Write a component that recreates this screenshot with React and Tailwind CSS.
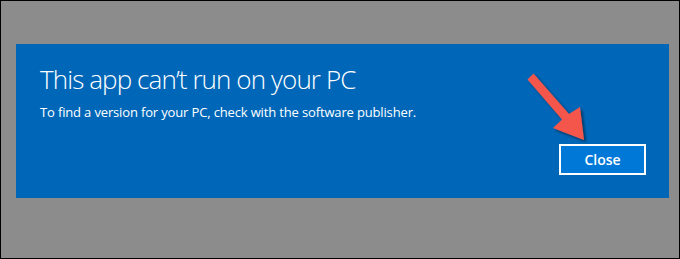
export default function App() {
  return (
    <div className="relative w-[680px] h-[259px] border border-black bg-[#8c8c8c] pl-[15px] pt-[43px]" style={{ fontFamily: '"Open Sans", "Noto Sans", sans-serif' }}>
      <div className="flex flex-col w-[653px] h-[154px] bg-[#0067b8] pl-6 pr-[23px] pb-[23px]">
        <h1 className="mt-[17px] text-[26px] leading-[36px] font-light text-white tracking-[-0.9px]">This app can’t run on your PC</h1>
        <p className="mt-[6px] text-[13px] leading-[18px] text-white tracking-[-0.15px]">To find a version for your PC, check with the software publisher.</p>
        <div className="mt-auto flex justify-end">
          <button className="w-[87px] h-[31px] border-2 border-white bg-[#0078d7] text-white text-[14px] font-semibold">Close</button>
        </div>
      </div>
      <svg className="absolute left-0 top-0 pointer-events-none" width="680" height="259" viewBox="0 0 680 259">
        <defs>
          <filter id="sh" x="-20%" y="-20%" width="140%" height="140%">
            <feGaussianBlur in="SourceAlpha" stdDeviation="1.5" />
            <feOffset dx="2" dy="2" result="b" />
            <feComponentTransfer><feFuncA type="linear" slope="0.5" /></feComponentTransfer>
            <feMerge><feMergeNode /><feMergeNode in="SourceGraphic" /></feMerge>
          </filter>
        </defs>
        <polygon filter="url(#sh)" fill="#f5574b" points="526.5,78.5 561,118.5 552,127 583,139 579,106 568,113 532.5,72.5" />
      </svg>
    </div>
  );
}
